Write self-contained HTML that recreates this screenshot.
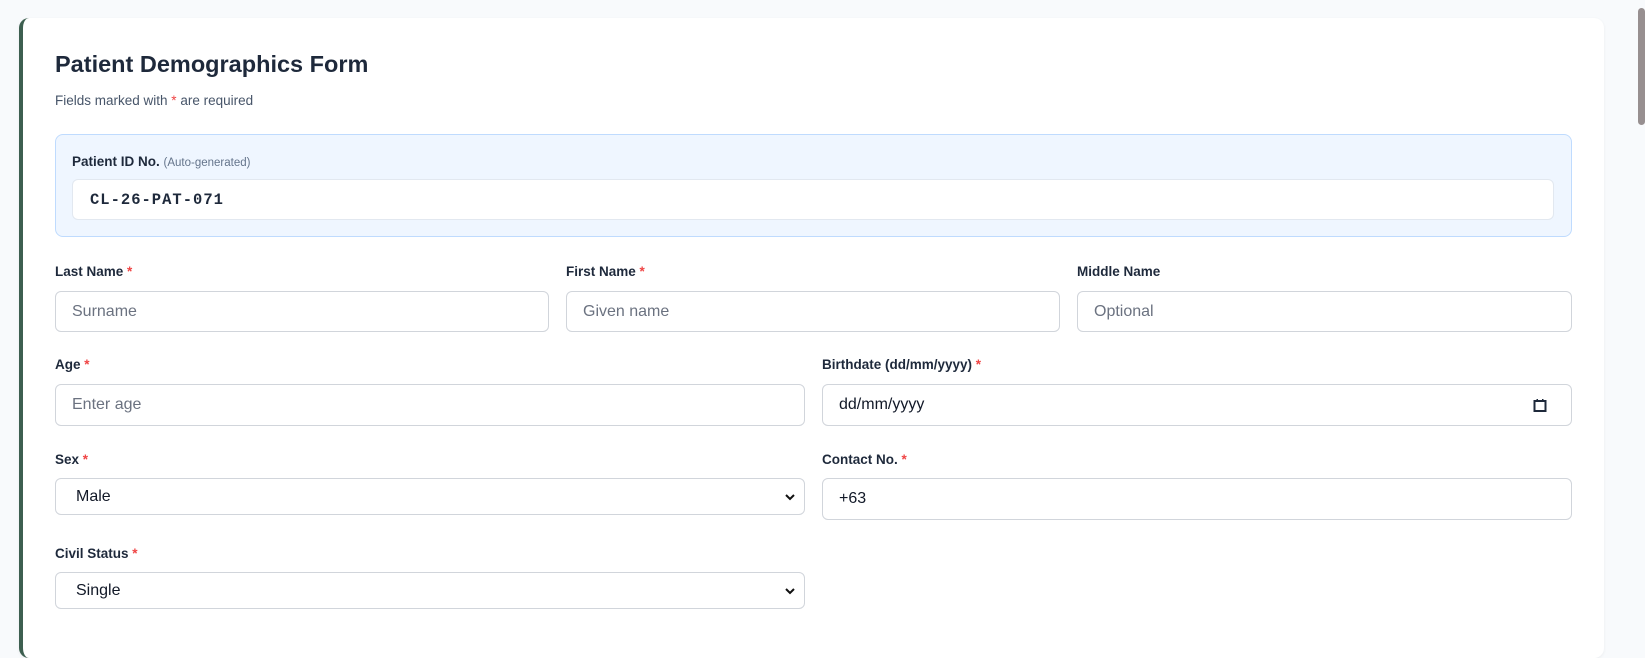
<!DOCTYPE html>
<html><head><style>
*{box-sizing:border-box;margin:0;padding:0}
body{width:1645px;height:627px;overflow:hidden;background:#f8fafc;font-family:"Liberation Sans",Arial,sans-serif;position:relative}
.card{position:absolute;left:19px;top:18px;width:1585px;height:640px;background:#fff;border-radius:10px;border-left:4px solid #3d5f50;box-shadow:0 1px 3px rgba(0,0,0,.06)}
.abs{position:absolute}
h1{position:absolute;left:55px;top:51px;font-size:23.5px;font-weight:bold;color:#1e293b}
.sub{left:55px;top:93px;font-size:13.5px;color:#475569}
.req{color:#ef4444}
.idbox{left:55px;top:134px;width:1517px;height:103px;background:#eff6ff;border:1px solid #bfdbfe;border-radius:8px}
.lbl{font-size:13.5px;font-weight:bold;color:#1e293b}
.lbl small{font-weight:normal;font-size:11.5px;color:#64748b}
.inp{border:1px solid #d1d5db;border-radius:6px;background:#fff;font-size:16px;color:#6b7280;padding-left:16px;display:flex;align-items:center}
.val{color:#111827}
.sel{padding-left:20px;color:#111827}
.chev{position:absolute;right:8px;top:50%;margin-top:-4px}
.scroll{left:1638px;top:8px;width:7px;height:117px;background:#978f90;border-radius:4px}
</style></head><body>
<div class="card"></div>
<h1>Patient Demographics Form</h1>
<div class="abs sub">Fields marked with <span class="req">*</span> are required</div>
<div class="abs idbox"></div>
<div class="abs lbl" style="left:72px;top:154px">Patient ID No. <small>(Auto-generated)</small></div>
<div class="abs inp" style="left:72px;top:179px;width:1482px;height:41px;border-color:#e2e8f0;font-family:'Liberation Mono',monospace;font-weight:bold;color:#1e293b;font-size:15.5px;letter-spacing:1px;padding-left:17px">CL-26-PAT-071</div>

<div class="abs lbl" style="left:55px;top:264px">Last Name <span class="req">*</span></div>
<div class="abs lbl" style="left:566px;top:264px">First Name <span class="req">*</span></div>
<div class="abs lbl" style="left:1077px;top:264px">Middle Name</div>
<div class="abs inp" style="left:55px;top:291px;width:494px;height:41px">Surname</div>
<div class="abs inp" style="left:566px;top:291px;width:494px;height:41px">Given name</div>
<div class="abs inp" style="left:1077px;top:291px;width:495px;height:41px">Optional</div>

<div class="abs lbl" style="left:55px;top:357px">Age <span class="req">*</span></div>
<div class="abs lbl" style="left:822px;top:357px">Birthdate (dd/mm/yyyy) <span class="req">*</span></div>
<div class="abs inp" style="left:55px;top:384px;width:750px;height:42px">Enter age</div>
<div class="abs inp val" style="left:822px;top:384px;width:750px;height:42px">dd/mm/yyyy
<svg class="abs" style="right:24px;top:13px" width="14" height="15" viewBox="0 0 14 15"><rect x="1.5" y="3" width="11" height="10" fill="none" stroke="#1e293b" stroke-width="2"/><rect x="3.5" y="1" width="1.5" height="3" fill="#1e293b"/><rect x="9" y="1" width="1.5" height="3" fill="#1e293b"/></svg></div>

<div class="abs lbl" style="left:55px;top:452px">Sex <span class="req">*</span></div>
<div class="abs lbl" style="left:822px;top:452px">Contact No. <span class="req">*</span></div>
<div class="abs inp sel" style="left:55px;top:478px;width:750px;height:37px">Male
<svg class="chev" width="12" height="8" viewBox="0 0 12 8"><path d="M2 2l4 4 4-4" fill="none" stroke="#111" stroke-width="2"/></svg></div>
<div class="abs inp val" style="left:822px;top:478px;width:750px;height:42px">+63</div>

<div class="abs lbl" style="left:55px;top:546px">Civil Status <span class="req">*</span></div>
<div class="abs inp sel" style="left:55px;top:572px;width:750px;height:37px">Single
<svg class="chev" width="12" height="8" viewBox="0 0 12 8"><path d="M2 2l4 4 4-4" fill="none" stroke="#111" stroke-width="2"/></svg></div>

<div class="abs scroll"></div>
</body></html>
